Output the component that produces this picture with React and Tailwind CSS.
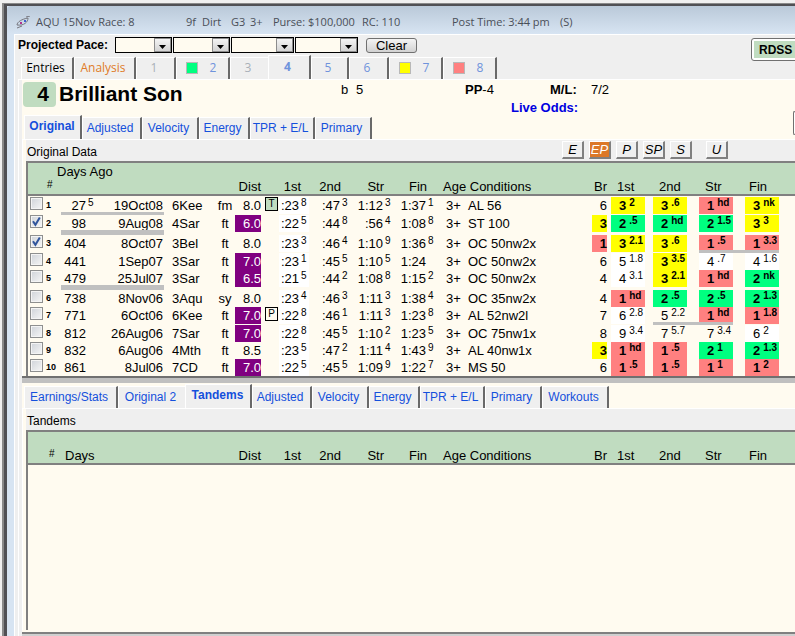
import { useState } from 'react';
import clsx from 'clsx';

const ENTRY_TABS = [
  { label: 'Entries', width: 'w-[53px]', color: 'text-black' },
  { label: 'Analysis', width: 'w-[62px]', color: 'text-[#e07b28]' },
  { label: '1', width: 'w-10', color: 'text-[#a9b0b8]' },
  { label: '2', width: 'w-[54px]', color: 'text-[#6f93dc]', swatch: 'bg-[#00ff80]' },
  { label: '3', width: 'w-[38px]', color: 'text-[#a9b0b8]' },
  { label: '4', width: 'w-[43px]', color: 'text-[#6f93dc]' },
  { label: '5', width: 'w-[38px]', color: 'text-[#6f93dc]' },
  { label: '6', width: 'w-10', color: 'text-[#6f93dc]' },
  { label: '7', width: 'w-[54px]', color: 'text-[#6f93dc]', swatch: 'bg-[#ffff00]' },
  { label: '8', width: 'w-[54px]', color: 'text-[#6f93dc]', swatch: 'bg-[#ff8080]' },
];

const TOP_TABS = [
  { label: 'Original', width: 'w-[58px]' },
  { label: 'Adjusted', width: 'w-[60px]' },
  { label: 'Velocity', width: 'w-[57px]' },
  { label: 'Energy', width: 'w-[51px]' },
  { label: 'TPR + E/L', width: 'w-[65px]' },
  { label: 'Primary', width: 'w-[57px]' },
];

const BOTTOM_TABS = [
  { label: 'Earnings/Stats', width: 'w-[94px]' },
  { label: 'Original 2', width: 'w-[67px]' },
  { label: 'Tandems', width: 'w-[67px]' },
  { label: 'Adjusted', width: 'w-[60px]' },
  { label: 'Velocity', width: 'w-[57px]' },
  { label: 'Energy', width: 'w-[51px]' },
  { label: 'TPR + E/L', width: 'w-[65px]' },
  { label: 'Primary', width: 'w-[57px]' },
  { label: 'Workouts', width: 'w-[67px]' },
];

const CELL_COLORS = {
  y: 'bg-[#ffff00] font-bold',
  g: 'bg-[#00ff80] font-bold',
  r: 'bg-[#ff8080] font-bold',
  w: 'bg-white',
  n: '',
};

// times: [digits, fraction], calls: [position, lengths, color]
const RACES = [
  { h: 'h-[18px]', days: ['27', '5'], date: '19Oct08', bar: 'thin', track: '6Kee', surf: 'fm', dist: '8.0', flag: 'T',
    times: [[':23', '8'], [':47', '3'], ['1:12', '3'], ['1:37', '1']], cond: 'AL 56', br: ['6', 'n'],
    calls: [['3', '2', 'y'], ['3', '.6', 'y'], ['1', 'hd', 'r'], ['3', 'nk', 'y']] },
  { h: 'h-5', days: ['98'], date: '9Aug08', bar: 'thick', checked: true, track: '4Sar', surf: 'ft', dist: '6.0', sprint: true,
    times: [[':22', '5'], [':44', '8'], [':56', '4'], ['1:08', '8']], cond: 'ST 100', br: ['3', 'y'],
    calls: [['2', '.5', 'g'], ['2', 'hd', 'g'], ['2', '1.5', 'g'], ['3', '3', 'y']] },
  { h: 'h-[18px]', days: ['404'], date: '8Oct07', checked: true, track: '3Bel', surf: 'ft', dist: '8.0',
    times: [[':23', '3'], [':46', '4'], ['1:10', '9'], ['1:36', '8']], cond: 'OC 50nw2x', br: ['1', 'r'],
    calls: [['3', '2.1', 'y'], ['3', '.6', 'y'], ['1', '.5', 'r'], ['1', '3.3', 'r']], callBars: [2, 3] },
  { h: 'h-[17px]', days: ['441'], date: '1Sep07', track: '3Sar', surf: 'ft', dist: '7.0', sprint: true,
    times: [[':23', '1'], [':45', '5'], ['1:10', '5'], ['1:24', '']], cond: 'OC 50nw2x', br: ['6', 'n'],
    calls: [['5', '1.8', 'w'], ['3', '3.5', 'y'], ['4', '.7', 'w'], ['4', '1.6', 'w']] },
  { h: 'h-5', days: ['479'], date: '25Jul07', bar: 'thick', track: '3Sar', surf: 'ft', dist: '6.5', sprint: true,
    times: [[':21', '5'], [':44', '2'], ['1:08', '8'], ['1:15', '2']], cond: 'OC 50nw2x', br: ['4', 'n'],
    calls: [['4', '3.1', 'w'], ['3', '2.1', 'y'], ['1', 'hd', 'r'], ['2', 'nk', 'g']] },
  { h: 'h-[17px]', days: ['738'], date: '8Nov06', track: '3Aqu', surf: 'sy', dist: '8.0',
    times: [[':23', '4'], [':46', '3'], ['1:11', '3'], ['1:38', '4']], cond: 'OC 35nw2x', br: ['4', 'n'],
    calls: [['1', 'hd', 'r'], ['2', '.5', 'g'], ['2', '.5', 'g'], ['2', '1.3', 'g']] },
  { h: 'h-[18px]', days: ['771'], date: '6Oct06', track: '6Kee', surf: 'ft', dist: '7.0', sprint: true, flag: 'P',
    times: [[':22', '8'], [':46', '1'], ['1:11', '3'], ['1:23', '8']], cond: 'AL 52nw2l', br: ['7', 'n'],
    calls: [['6', '2.8', 'w'], ['5', '2.2', 'n'], ['1', 'hd', 'r'], ['1', '1.8', 'r']], callBars: [1, 2] },
  { h: 'h-[17px]', days: ['812'], date: '26Aug06', track: '7Sar', surf: 'ft', dist: '7.0', sprint: true,
    times: [[':22', '8'], [':45', '5'], ['1:10', '2'], ['1:23', '5']], cond: 'OC 75nw1x', br: ['8', 'n'],
    calls: [['9', '3.4', 'w'], ['7', '5.7', 'n'], ['7', '3.4', 'n'], ['6', '2', 'w']] },
  { h: 'h-[17px]', days: ['832'], date: '6Aug06', track: '4Mth', surf: 'ft', dist: '8.5',
    times: [[':23', '5'], [':47', '2'], ['1:11', '4'], ['1:43', '9']], cond: 'AL 40nw1x', br: ['3', 'y'],
    calls: [['1', 'hd', 'r'], ['1', '.5', 'r'], ['2', '1', 'g'], ['2', '1.3', 'g']] },
  { h: 'h-[17px]', days: ['861'], date: '8Jul06', track: '7CD', surf: 'ft', dist: '7.0', sprint: true,
    times: [[':22', '5'], [':45', '5'], ['1:09', '9'], ['1:22', '7']], cond: 'MS 50', br: ['6', 'n'],
    calls: [['1', '.5', 'r'], ['1', '.5', 'r'], ['1', '1', 'r'], ['1', '2', 'r']] },
];

const PACE_STYLES = [
  { label: 'E' },
  { label: 'EP' },
  { label: 'P' },
  { label: 'SP' },
  { label: 'S' },
  { label: 'U', space: 'ml-[9px]' },
];

function PaceSelect({ label, width }) {
  return (
    <span className={clsx('flex h-4 border border-black bg-[#fffbf0]', width)}>
      <select aria-label={label} className="min-w-0 flex-1 appearance-none bg-transparent text-xs outline-none" />
      <span className="flex w-[17px] items-center justify-center border border-[#8c8c8c] bg-linear-to-b from-[#f4f4f4] to-[#d4d4d4] pt-1">
        <svg width="7" height="4" viewBox="0 0 7 4" aria-hidden="true">
          <path d="M0 0h7L3.5 4z" fill="#000" />
        </svg>
      </span>
    </span>
  );
}

function EntryTabs() {
  const [active, setActive] = useState('4');
  return (
    <div className="flex h-6 items-end pl-[6px] font-['Open_Sans',sans-serif] text-xs">
      {ENTRY_TABS.map((tab) => (
        <button
          key={tab.label}
          type="button"
          onClick={() => setActive(tab.label)}
          className={clsx(
            'flex shrink-0 items-center justify-center border-t border-l border-white bg-[#efefef] pr-[3px] pb-0.5',
            tab.width,
            tab.color,
            tab.label !== '3' && 'border-r-2 border-r-[#696969]',
            tab.swatch && 'gap-3',
            active === tab.label ? 'h-6 font-bold' : 'h-[22px]'
          )}
        >
          {tab.swatch && <span className={clsx('h-3 w-3 border border-[#b8b8b8]', tab.swatch)} />}
          {tab.label}
        </button>
      ))}
    </div>
  );
}

function PanelTabs({ tabs, initial }) {
  const [active, setActive] = useState(initial);
  return (
    <div className="flex h-6 items-end pl-0.5 text-xs text-[#1450dc]">
      {tabs.map((tab) => (
        <button
          key={tab.label}
          type="button"
          onClick={() => setActive(tab.label)}
          className={clsx(
            'shrink-0 whitespace-nowrap border-t border-l border-white bg-[#efefef]',
            tab.width,
            tab.label !== 'Original 2' && 'border-r-2 border-r-[#696969]',
            active === tab.label ? 'h-6 pr-px pb-1 font-bold' : 'h-[22px] pr-[3px] pb-0.5'
          )}
        >
          {tab.label}
        </button>
      ))}
    </div>
  );
}

function Columns() {
  return (
    <colgroup>
      <col className="w-[18px]" />
      <col className="w-[15px]" />
      <col className="w-[35px]" />
      <col className="w-[68px]" />
      <col className="w-[51px]" />
      <col className="w-5" />
      <col className="w-[26px]" />
      <col className="w-[18px]" />
      <col className="w-[30px]" />
      <col className="w-[41px]" />
      <col className="w-[43px]" />
      <col className="w-[43px]" />
      <col className="w-8" />
      <col className="w-[124px]" />
      <col className="w-[15px]" />
      <col className="w-[42px]" />
      <col className="w-[46px]" />
      <col className="w-[46px]" />
      <col className="w-[46px]" />
      <col />
    </colgroup>
  );
}

function TableHead({ topLabel, daysLabel }) {
  const th = 'h-[17px] border-b-2 border-[#808080] p-0 font-normal';
  return (
    <thead className="bg-[#c0dcc0] leading-[15px] whitespace-nowrap">
      <tr>
        <th colSpan={20} className="h-4 p-0 pl-[29px] text-left font-normal">{topLabel}</th>
      </tr>
      <tr>
        <th className={th} />
        <th className={clsx(th, 'text-left align-top text-[10px] leading-[11px]', daysLabel ? 'pl-[3px]' : 'pl-px')}>
          #
        </th>
        <th className={clsx(th, 'pl-1 text-left')}>{daysLabel}</th>
        <th className={th} />
        <th className={th} />
        <th className={th} />
        <th className={clsx(th, 'text-right')}>Dist</th>
        <th className={th} />
        <th className={clsx(th, 'pr-2 text-right')}>1st</th>
        <th className={clsx(th, 'pr-[9px] text-right')}>2nd</th>
        <th className={clsx(th, 'pr-[9px] text-right')}>Str</th>
        <th className={clsx(th, 'pr-[9px] text-right')}>Fin</th>
        <th colSpan={2} className={clsx(th, 'pl-[7px] text-left')}>Age Conditions</th>
        <th className={clsx(th, 'text-right')}>Br</th>
        <th className={clsx(th, 'pl-2.5 text-left')}>1st</th>
        <th className={clsx(th, 'pl-2.5 text-left')}>2nd</th>
        <th className={clsx(th, 'pl-2.5 text-left')}>Str</th>
        <th className={clsx(th, 'pl-2 text-left')}>Fin</th>
        <th className={th} />
      </tr>
    </thead>
  );
}

// Digits with a small raised fraction after them
function Time({ value, className }) {
  return (
    <div className={clsx('flex h-[17px] items-start justify-end', className)}>
      <span>{value[0]}</span>
      <sup className="top-0 ml-0.5 w-2 text-left text-[10px] leading-3">{value[1]}</sup>
    </div>
  );
}

function DayBar({ size }) {
  if (!size) return null;
  return (
    <span className={clsx('absolute inset-x-0 bottom-0 bg-[#c0c0c0]', size === 'thin' ? 'h-[3px]' : 'h-[5px]')} />
  );
}

function RaceRow({ race, index }) {
  return (
    <tr className={clsx('align-top', race.h)}>
      <td className="p-0 pl-0.5">
        <span className="relative block h-[13px] w-[13px]">
          <input
            type="checkbox"
            aria-label={`Select race ${index + 1}`}
            defaultChecked={race.checked}
            className="peer block h-[13px] w-[13px] appearance-none border border-[#8e8f8f] bg-linear-to-br from-[#cfd3d9] to-[#f6f6f6] shadow-[inset_0_0_0_1px_#f4f4f4]"
          />
          <svg
            viewBox="0 0 13 13"
            className="pointer-events-none absolute inset-0 hidden h-[13px] w-[13px] peer-checked:block"
            aria-hidden="true"
          >
            <path d="M3 6.2l2.4 3.6L9.8 2.6" fill="none" stroke="#31559c" strokeWidth="2" />
          </svg>
        </span>
      </td>
      <td className="p-0 text-[9px] leading-[17px] font-bold">{index + 1}</td>
      <td className="relative p-0">
        <Time value={race.days} />
        <DayBar size={race.bar} />
      </td>
      <td className="relative p-0 pr-px text-right">
        {race.date}
        <DayBar size={race.bar} />
      </td>
      <td className="p-0 pl-2">{race.track}</td>
      <td className="p-0 text-center">{race.surf}</td>
      <td className="p-0">
        <div className={clsx('h-[17px] text-right', race.sprint && 'bg-[#800080] text-white')}>{race.dist}</div>
      </td>
      <td className="p-0 pl-1">
        {race.flag && (
          <div
            className={clsx(
              'h-[14px] w-[13px] border border-black text-center text-[10px] leading-3',
              race.flag === 'T' && 'bg-[#c0dcc0]'
            )}
          >
            {race.flag}
          </div>
        )}
      </td>
      {race.times.map((time, i) => (
        <td key={i} className="p-0">
          <Time value={time} className={i === 0 && 'bg-white'} />
        </td>
      ))}
      <td className="p-0 pl-2.5">3+</td>
      <td className="p-0 whitespace-nowrap">{race.cond}</td>
      <td className="p-0">
        <div className={clsx('h-[17px] text-right', CELL_COLORS[race.br[1]])}>{race.br[0]}</div>
      </td>
      {race.calls.map(([pos, len, color], i) => (
        <td key={i} className="relative p-0 pl-1">
          <div className={clsx('flex h-[17px] w-[34px] items-start gap-[3px] pl-2', CELL_COLORS[color])}>
            <span>{pos}</span>
            <sup className="top-0 text-[10px] leading-3">{len}</sup>
          </div>
          {race.callBars?.includes(i) && (
            <span
              className={clsx(
                'absolute bottom-0 h-[3px] bg-[#c0c0c0]',
                race.callBars[0] === i ? 'right-0 left-1' : 'right-2 left-0'
              )}
            />
          )}
        </td>
      ))}
      <td className="p-0" />
    </tr>
  );
}

function TitleBar() {
  return (
    <header className="flex h-7 items-center overflow-hidden rounded-tl bg-linear-to-b from-[#bac9d9] to-[#d7e4f2] pt-1 pl-[9px] font-['Open_Sans',sans-serif] text-[11px] whitespace-nowrap text-[#4a4f58]">
      <svg width="15" height="13" viewBox="0 0 15 13" className="mr-[5px] shrink-0" aria-hidden="true">
        <g fill="none" stroke="#77777f" strokeWidth="1">
          <path d="M1 9C1 6 6 3 12 2C12 6 8 10 1 9z" />
          <path d="M1 12l5-2M10 1l4-1" />
        </g>
        <path d="M4 7h2" stroke="#b03090" strokeWidth="2" />
        <path d="M8 5h2" stroke="#4060d0" strokeWidth="2" />
      </svg>
      <h1 className="w-[150px]">AQU 15Nov Race: 8</h1>
      <span className="w-4">9f</span>
      <span className="w-[29px]">Dirt</span>
      <span className="w-[19px]">G3</span>
      <span className="w-[23px]">3+</span>
      <span className="w-[89px]">Purse: $100,000</span>
      <span className="w-[90px]">RC: 110</span>
      <span className="w-[108px]">Post Time: 3:44 pm</span>
      <span>(S)</span>
    </header>
  );
}

function Toolbar() {
  return (
    <div className="flex">
      <div className="min-w-0 flex-1">
        <div className="flex h-5 items-center gap-px pl-[3px]">
          <span className="w-24 text-xs font-bold whitespace-nowrap">Projected Pace:</span>
          <PaceSelect label="Projected pace 1" width="w-[57px]" />
          <PaceSelect label="Projected pace 2" width="w-[57px]" />
          <PaceSelect label="Projected pace 3" width="w-[63px]" />
          <PaceSelect label="Projected pace 4" width="w-[63px]" />
          <button
            type="button"
            className="ml-[7px] h-[15px] w-[51px] rounded-[3px] border border-[#707070] bg-linear-to-b from-[#f4f4f4] to-[#d2d2d2] leading-[13px]"
          >
            Clear
          </button>
        </div>
        <EntryTabs />
      </div>
      <div className="w-11 overflow-hidden pt-[3px]">
        <button
          type="button"
          className="h-[23px] w-20 rounded-[3px] border border-[#707070] bg-white p-0.5 text-xs font-bold"
        >
          <span className="block h-full bg-[#c0dcc0] pl-[5px] text-left leading-[18px]">RDSS</span>
        </button>
      </div>
    </div>
  );
}

function HorseHeader() {
  return (
    <div className="flex h-[35px] pt-0.5 pl-px leading-[15px] whitespace-nowrap">
      <div className="h-[25px] w-[33px] rounded bg-[#c0dcc0] pr-[7px] text-right text-[21px] leading-6 font-bold">
        4
      </div>
      <h2 className="w-[285px] pl-[3px] text-[21px] leading-6 font-bold">Brilliant Son</h2>
      <span className="w-[15px]">b</span>
      <span className="w-[109px]">5</span>
      <div className="w-[126px]">
        <div className="flex justify-between">
          <span><b>PP</b>-4</span>
          <b className="w-[41px]">M/L:</b>
        </div>
        <div className="mt-[3px] pl-[46px] font-bold text-[#0000e0]">Live Odds:</div>
      </div>
      <span>7/2</span>
    </div>
  );
}

function PaceStyleButtons() {
  const [active, setActive] = useState('EP');
  return (
    <div className="flex gap-[5px]">
      {PACE_STYLES.map((style) => (
        <button
          key={style.label}
          type="button"
          onClick={() => setActive(style.label)}
          className={clsx(
            'h-[18px] w-[22px] border border-r-2 border-b-2 border-t-white border-r-[#808080] border-b-[#808080] border-l-white leading-[15px] italic',
            style.space,
            active === style.label ? 'bg-[#dc7828] text-white' : 'bg-[#efefef]'
          )}
        >
          {style.label}
        </button>
      ))}
    </div>
  );
}

export default function App() {
  return (
    <div className="flex h-screen flex-col overflow-hidden bg-[#f0f0f0] pt-[3px] pl-0.5 font-['Liberation_Sans',Arial,sans-serif] text-[13px] text-black">
      <div className="flex min-h-0 flex-1 flex-col border-t border-l-2 border-[#8a8a8a]">
        <div className="flex min-h-0 flex-1 flex-col border-t-2 border-l-[3px] border-[#505054] bg-[#d7e4f2]">
          <TitleBar />
          <main className="ml-[7px] flex min-h-0 flex-1 flex-col border-t border-l border-white bg-[#efefef]">
            <Toolbar />

            <div className="ml-[3px] flex min-h-0 flex-1 flex-col border-t border-l border-white pl-[3px]">
              <div className="flex min-h-0 flex-1 flex-col bg-[#fffbf0]">
                <HorseHeader />

                {/* Past performances */}
                <div className="flex h-6 justify-between">
                  <PanelTabs tabs={TOP_TABS} initial="Original" />
                  <span className="-mt-1 h-6 w-0.5 rounded-l border border-r-0 border-[#707070] bg-white" />
                </div>
                <section className="border-t border-l border-white">
                  <div className="ml-[3px] bg-[#efefef]">
                    <div className="flex h-[21px] items-start">
                      <h3 className="w-[536px] pl-px text-xs leading-6">Original Data</h3>
                      <div className="pt-px">
                        <PaceStyleButtons />
                      </div>
                    </div>
                    <div className="border-t-2 border-l-2 border-[#808080] bg-[#fffbf0]">
                      <table className="w-full table-fixed border-separate border-spacing-0 leading-[17px]">
                        <Columns />
                        <TableHead topLabel="Days Ago" />
                        <tbody className="before:block before:h-px">
                          {RACES.map((race, i) => (
                            <RaceRow key={race.date} race={race} index={i} />
                          ))}
                        </tbody>
                      </table>
                    </div>
                  </div>
                </section>

                <div className="h-[7px] shrink-0 border-t-2 border-[#707070] bg-[#c0c0c0]" />

                {/* Tandem races */}
                <div className="pt-px">
                  <PanelTabs tabs={BOTTOM_TABS} initial="Tandems" />
                </div>
                <section className="flex min-h-0 flex-1 flex-col border-t border-l border-white">
                  <div className="ml-[3px] flex min-h-0 flex-1 flex-col bg-[#efefef]">
                    <h3 className="h-[21px] pl-px text-xs leading-6">Tandems</h3>
                    <div className="flex-1 border-t-2 border-l-2 border-[#808080] bg-[#fffbf0]">
                      <table className="w-full table-fixed border-separate border-spacing-0">
                        <Columns />
                        <TableHead daysLabel="Days" />
                      </table>
                    </div>
                  </div>
                </section>
                <div className="mt-0.5 h-1 shrink-0 border-t-2 border-[#808080] bg-[#d0d0d0]" />
              </div>
            </div>
          </main>
        </div>
      </div>
    </div>
  );
}
